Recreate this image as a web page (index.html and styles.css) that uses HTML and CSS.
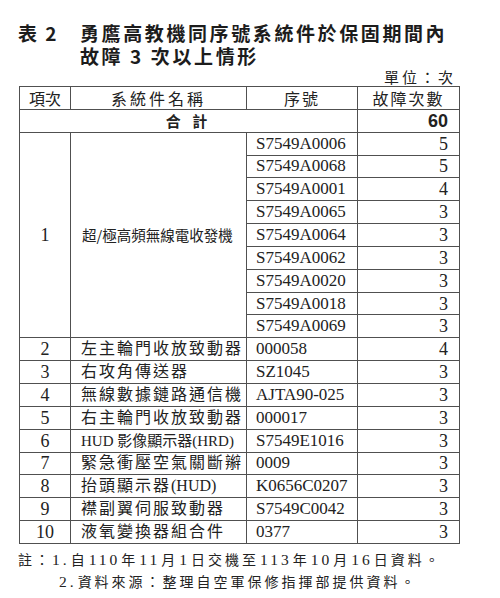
FILE: index.html
```html
<!DOCTYPE html>
<html lang="zh-Hant">
<head>
<meta charset="utf-8">
<title>表 2</title>
<link rel="stylesheet" href="styles.css">
</head>
<body>
<div class="page">
  <div class="title">
    <div class="label">表 2</div>
    <div class="heading">勇鷹高教機同序號系統件於保固期間內<br>故障 3 次以上情形</div>
  </div>
  <div class="unit">單位：次</div>
  <table class="data">
    <colgroup><col class="c1"><col class="c2"><col class="c3"><col class="c4"></colgroup>
    <thead>
      <tr><th class="h-idx">項次</th><th class="h-name">系統件名稱</th><th>序號</th><th class="h-cnt">故障次數</th></tr>
    </thead>
    <tbody>
      <tr class="total"><td colspan="3" class="total-label">合 計</td><td class="num total-num">60</td></tr>
      <tr><td rowspan="9" class="idx">1</td><td rowspan="9" class="name name1">超/極高頻無線電收發機</td><td class="sn">S7549A0006</td><td class="num">5</td></tr>
      <tr><td class="sn">S7549A0068</td><td class="num">5</td></tr>
      <tr><td class="sn">S7549A0001</td><td class="num">4</td></tr>
      <tr><td class="sn">S7549A0065</td><td class="num">3</td></tr>
      <tr><td class="sn">S7549A0064</td><td class="num">3</td></tr>
      <tr><td class="sn">S7549A0062</td><td class="num">3</td></tr>
      <tr><td class="sn">S7549A0020</td><td class="num">3</td></tr>
      <tr><td class="sn">S7549A0018</td><td class="num">3</td></tr>
      <tr><td class="sn">S7549A0069</td><td class="num">3</td></tr>
      <tr><td class="idx">2</td><td class="name">左主輪門收放致動器</td><td class="sn">000058</td><td class="num">4</td></tr>
      <tr><td class="idx">3</td><td class="name">右攻角傳送器</td><td class="sn">SZ1045</td><td class="num">3</td></tr>
      <tr><td class="idx">4</td><td class="name">無線數據鏈路通信機</td><td class="sn">AJTA90-025</td><td class="num">3</td></tr>
      <tr><td class="idx">5</td><td class="name">右主輪門收放致動器</td><td class="sn">000017</td><td class="num">3</td></tr>
      <tr><td class="idx">6</td><td class="name name-tight">HUD 影像顯示器(HRD)</td><td class="sn">S7549E1016</td><td class="num">3</td></tr>
      <tr><td class="idx">7</td><td class="name">緊急衝壓空氣關斷辮</td><td class="sn">0009</td><td class="num">3</td></tr>
      <tr><td class="idx">8</td><td class="name">抬頭顯示器<span class="lat">(HUD)</span></td><td class="sn">K0656C0207</td><td class="num">3</td></tr>
      <tr><td class="idx">9</td><td class="name">襟副翼伺服致動器</td><td class="sn">S7549C0042</td><td class="num">3</td></tr>
      <tr><td class="idx">10</td><td class="name">液氧變換器組合件</td><td class="sn">0377</td><td class="num">3</td></tr>
    </tbody>
  </table>
  <div class="notes">
    <div class="notes-label">註：</div>
    <div class="notes-body">
      <div class="note"><span class="n">1.</span>自<span class="n">110</span>年<span class="n">11</span>月<span class="n">1</span>日交機至<span class="n">113</span>年<span class="n">10</span>月<span class="n">16</span>日資料。</div>
      <div class="note note-2"><span class="n">2.</span>資料來源：整理自空軍保修指揮部提供資料。</div>
    </div>
  </div>
</div>
</body>
</html>
```

FILE: styles.css
```css
html, body {
  margin: 0;
  padding: 0;
  background: #ffffff;
}

body {
  font-family: "Liberation Serif", "Noto Sans CJK TC", serif;
  color: #222222;
}

.page {
  padding: 21px 0 0 18px;
  width: 441px;
}

.title {
  display: flex;
  font-family: "Noto Sans CJK TC", sans-serif;
  font-weight: 700;
  font-size: 19px;
  line-height: 23px;
  color: #1c1c1c;
}

.label {
  width: 62px;
  flex: none;
  letter-spacing: 2px;
}

.heading {
  letter-spacing: 2.6px;
}

.unit {
  text-align: right;
  font-family: "Noto Sans CJK TC", sans-serif;
  font-size: 15px;
  line-height: 19px;
  letter-spacing: 3px;
  padding-right: 3px;
  margin-left: 1px;
}

.data {
  margin-left: 1px;
  width: 441px;
  table-layout: fixed;
  border-collapse: collapse;
  border: 1px solid #505050;
}

.c1 { width: 51px; }
.c2 { width: 176px; }
.c3 { width: 111px; }
.c4 { width: 102px; }

.data th,
.data td {
  border: 1px solid #505050;
  height: 21.85px;
  padding: 0;
  line-height: 20px;
  white-space: nowrap;
  overflow: hidden;
}

.data th {
  font-family: "Noto Sans CJK TC", sans-serif;
  font-weight: 400;
  font-size: 16px;
  letter-spacing: 2px;
  text-align: center;
}

.data th.h-idx {
  letter-spacing: 0;
}

.data th.h-name {
  letter-spacing: 3px;
}

.data td.total-label {
  text-align: center;
  font-family: "Noto Sans CJK TC", sans-serif;
  font-weight: 700;
  font-size: 15px;
  letter-spacing: 4px;
}

.data td.total-num {
  font-family: "Liberation Sans", sans-serif;
  font-weight: 700;
}

.data td.idx {
  text-align: center;
  font-size: 18px;
}

.data td.name {
  font-size: 16px;
  letter-spacing: 2px;
  padding-left: 10px;
}

.data td.name-tight {
  font-size: 15px;
  letter-spacing: 0;
}

.lat {
  letter-spacing: 0;
}

.data td.name1 {
  font-family: "Noto Sans CJK TC", sans-serif;
  font-size: 14.5px;
  letter-spacing: 0;
  padding-left: 11px;
}

.data td.sn {
  font-size: 17px;
  padding-left: 9px;
}

.data td.num {
  text-align: right;
  font-size: 18px;
  padding-right: 11px;
}

.notes {
  display: flex;
  margin-top: 5px;
  font-size: 14px;
  line-height: 21px;
  letter-spacing: 3px;
}

.notes-label {
  width: 33px;
  flex: none;
  font-family: "Noto Sans CJK TC", sans-serif;
}

.notes .n {
  font-size: 15.5px;
  margin: 0 1px;
}

.note-2 {
  padding-left: 7px;
}
```
